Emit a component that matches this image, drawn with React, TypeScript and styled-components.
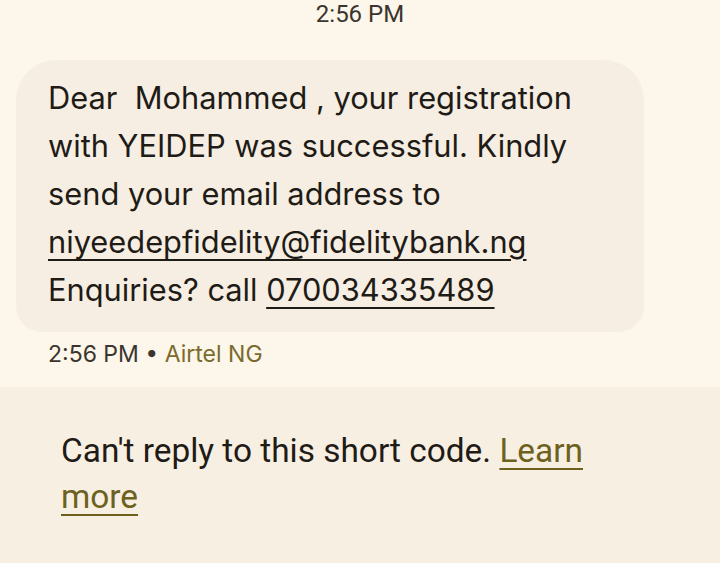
import React from "react";
import styled, { createGlobalStyle } from "styled-components";

const Global = createGlobalStyle`
  html, body { margin: 0; padding: 0; background: #fdf6ea; }
  #root { width: 720px; height: 563px; overflow: hidden; }
`;

const Page = styled.div`
  width: 720px;
  height: 563px;
  display: flex;
  flex-direction: column;
  background: #fdf6ea;
  color: #1f1b16;
`;

const Stamp = styled.div`
  text-align: center;
  font-family: Roboto, "Liberation Sans", sans-serif;
  font-size: 24px;
  line-height: 28px;
  color: #3a352e;
  height: 28px;
`;

const Thread = styled.div`
  display: flex;
  flex-direction: column;
  align-items: flex-start;
  padding: 32px 0 0 16px;
`;

const Bubble = styled.div`
  width: 628px;
  box-sizing: border-box;
  background: #f6eee3;
  border-radius: 40px 40px 26px 26px;
  padding: 14px 16px 18px 32px;
  font-family: Inter, "Open Sans", sans-serif;
  font-size: 30.8px;
  line-height: 48px;
  color: #1f1b16;
`;

const Line = styled.div`
  white-space: nowrap;
`;

const Link = styled.span`
  text-decoration: underline;
  text-decoration-thickness: 2px;
  text-underline-offset: 6px;
`;

const Meta = styled.div`
  margin: 10px 0 0 32px;
  font-family: Inter, "Open Sans", sans-serif;
  font-size: 23px;
  line-height: 24px;
  color: #3a352e;
`;

const Sender = styled.span`
  color: #7a6a2c;
`;

const Footer = styled.div`
  margin-top: 21px;
  flex: 1;
  background: #f8efe3;
  padding: 41px 40px 0 61px;
  font-family: Roboto, "Liberation Sans", sans-serif;
  font-size: 33.4px;
  line-height: 46px;
  color: #1f1b16;
`;

const LearnLink = styled.a`
  color: #6d6120;
  text-decoration: underline;
  text-decoration-thickness: 2px;
  text-underline-offset: 6px;
`;

export default function App() {
  return (
    <Page>
      <Global />
      <Stamp>2:56 PM</Stamp>
      <Thread>
        <Bubble>
          <Line>Dear&nbsp; Mohammed , your registration</Line>
          <Line>with YEIDEP was successful. Kindly</Line>
          <Line>send your email address to</Line>
          <Line>
            <Link>niyeedepfidelity@fidelitybank.ng</Link>
          </Line>
          <Line>
            Enquiries? call <Link>070034335489</Link>
          </Line>
        </Bubble>
        <Meta>
          2:56 PM • <Sender>Airtel NG</Sender>
        </Meta>
      </Thread>
      <Footer>
        Can't reply to this short code. <LearnLink>Learn</LearnLink>
        <br />
        <LearnLink>more</LearnLink>
      </Footer>
    </Page>
  );
}
